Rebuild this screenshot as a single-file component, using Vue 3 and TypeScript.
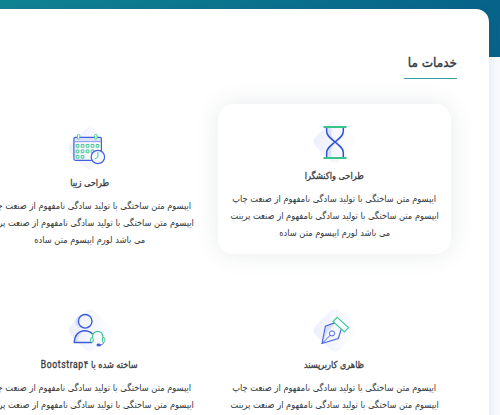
<script setup lang="ts">
interface Service {
  icon: 'hourglass' | 'calendar' | 'pen' | 'support'
  title: string
  latin?: string
  active?: boolean
}

const services: Service[] = [
  { icon: 'hourglass', title: 'طراحی واکنشگرا', active: true },
  { icon: 'calendar', title: 'طراحی زیبا' },
  { icon: 'pen', title: 'ظاهری کاربرپسند' },
  { icon: 'support', title: 'ساخته شده با ', latin: 'Bootstrap۴' },
]

const lines: string[] = [
  'ایپسوم متن ساختگی با تولید سادگی نامفهوم از صنعت چاپ',
  'ایپسوم متن ساختگی با تولید سادگی نامفهوم از صنعت پرینت',
  'می باشد لورم ایپسوم متن ساده',
]
</script>

<template>
  <div class="page" dir="rtl">
    <main class="panel">
      <h2 class="heading"><span class="heading-text">خدمات ما</span></h2>
      <section class="grid">
        <article v-for="s in services" :key="s.icon" class="card" :class="{ active: s.active }">
          <svg class="icon" viewBox="0 0 50 46" fill="none">
            <defs>
              <linearGradient :id="'blob-' + s.icon" x1="0" y1="1" x2="1" y2="0">
                <stop offset="0" stop-color="#ebeffc" />
                <stop offset="1" stop-color="#ffffff" />
              </linearGradient>
            </defs>
            <rect x="8" y="5.500" width="34" height="34" rx="7" transform="rotate(45 25 22.500)" :fill="`url(#blob-${s.icon})`" />
            <g v-if="s.icon === 'hourglass'" transform="translate(-.5 0)">
              <path d="M19 8c-1 9 0 10 6 15-6 5-7 8-6 15h3c-1-7 0-10 5-15-5-5-6-7-5-15z" fill="#dbe1fa" />
              <path d="M17.200 8v4.500c0 4 3 6 8.300 10.500s8.300 6.500 8.300 10.500V38M33.800 8v4.500c0 4-3 6-8.300 10.500S17.200 29.500 17.200 33.500V38" stroke="#3153d5" stroke-width="1.500" />
              <path d="M14 8h23M14 39h23" stroke="#35c58d" stroke-width="1.800" />
            </g>
            <g v-else-if="s.icon === 'calendar'" transform="translate(-5.800 0)">
              <path d="M15 12h27v4H15z" fill="#dbe1fa" />
              <rect x="14.700" y="11.300" width="27.500" height="23" rx="1.500" stroke="#4260da" stroke-width="1.200" />
              <path d="M15 15.600h27" stroke="#8c9eea" />
              <g stroke="#47ca96" stroke-width="1">
                <rect x="18.200" y="8.500" width="2.400" height="4.600" rx="1" fill="#fff" />
                <rect x="35.400" y="8.500" width="2.400" height="4.600" rx="1" fill="#fff" />
                <path d="M17 18.500h2.700v2.700H17zM22 18.500h2.700v2.700H22zM27 18.500h2.700v2.700H27zM32 18.500h2.700v2.700H32zM37 18.500h2.700v2.700H37zM17 24h2.700v2.700H17zM22 24h2.700v2.700H22zM27 24h2.700v2.700H27zM32 24h2.700v2.700H32zM17 29.500h2.700v2.700H17zM22 29.500h2.700v2.700H22z" />
              </g>
              <circle cx="38.700" cy="31" r="6.700" fill="#f7f9ff" stroke="#4260da" stroke-width="1.200" />
              <path d="M38.700 26v5.200L35.500 33" stroke="#47ca96" />
            </g>
            <g v-else-if="s.icon === 'pen'" transform="translate(-4 -2)">
              <path d="M16 38l4-17 9-4-3 4-4 4z" fill="#d7def9" />
              <path d="M16 37.500l3.400-17.300 10.300-3.700 5.600 6.300-3 9.700z" stroke="#4764db" stroke-width="1.150" />
              <path d="M16 37.500l8.400-8.400" stroke="#4764db" />
              <circle cx="26" cy="27.400" r="2.600" stroke="#4764db" />
              <path d="M31.200 11.300L42.500 21.600 38.400 26 27.100 15.500z" fill="#fbfeff" stroke="#3cca91" stroke-width="1.150" />
            </g>
            <g v-else transform="translate(-5.300 -.9)">
              <path d="M22 8a6.500 6.500 0 0 0 0 13 8 8 0 0 1 0-13zM16 35c0-7 4-11 10-11-6 2-8 6-8 11z" fill="#d7def9" />
              <circle cx="25.500" cy="14.200" r="6.800" stroke="#3c5cd9" stroke-width="1.400" />
              <path d="M32.500 35.400H14.600c0-7 4.200-11.800 10.400-11.800 3.500 0 6 1.200 7.800 3.300" stroke="#3c5cd9" stroke-width="1.400" />
              <path d="M32.800 31v-1.500a5.200 5.200 0 0 1 10.400 0V31" stroke="#3ac78f" stroke-width="1.200" />
              <rect x="31" y="30.600" width="2.500" height="4.600" rx="1.100" fill="#fff" stroke="#3ac78f" />
              <rect x="42.700" y="30.600" width="2.500" height="4.600" rx="1.100" fill="#fff" stroke="#3ac78f" />
              <path d="M43.500 35.500c0 1.600-1 2.200-2.600 2.200" stroke="#3c5cd9" />
              <rect x="37.200" y="37" width="3.600" height="1.800" rx=".9" fill="#3c5cd9" stroke="#3c5cd9" />
            </g>
          </svg>
          <h3 class="title">
            <span class="title-text">{{ s.title }}<span v-if="s.latin" class="latin">{{ s.latin }}</span></span>
          </h3>
          <p class="copy">
            <span v-for="line in lines" :key="line" class="line">{{ line }}</span>
          </p>
        </article>
      </section>
    </main>
  </div>
</template>

<style>
body {
  background: #f8f9fe;
  overflow: hidden;
}
</style>

<style scoped>
.page {
  box-sizing: border-box;
  width: 500px;
  height: 415px;
  padding: 9px 11px 0 0;
  overflow: hidden;
  background: linear-gradient(100deg, #108493 0%, #0b718d 55%, #08628a 100%) top / 100% 57px no-repeat #f8f9fe;
  font-family: "DejaVu Sans", sans-serif;
  color: #343a40;
}
.panel {
  box-sizing: border-box;
  width: 554px;
  height: 500px;
  padding-block: 41px 0;
  padding-inline: 38px 32px;
  border-radius: 13px;
  background: #fff;
  box-shadow: 0 0 10px rgba(50, 70, 110, 0.13);
}
.heading {
  box-sizing: border-box;
  width: 53px;
  height: 29px;
  margin: 0 -6px 0 0;
  border-bottom: 1px solid #369ea4;
  font-size: 13px;
  font-weight: 400;
  -webkit-text-stroke: 0.4px #343a40;
  line-height: 25px;
  white-space: nowrap;
}
.heading-text {
  display: inline-block;
  transform: scaleX(0.93);
  transform-origin: right;
}
.grid {
  display: grid;
  grid-template-columns: 233px 233px;
  grid-auto-rows: 150px;
  gap: 32px 12px;
  margin-top: 32px;
}
.card {
  display: flex;
  flex-direction: column;
  align-items: center;
  border-radius: 15px;
}
.card.active {
  transform: translateY(-7px);
  background: #fff;
  box-shadow: 0 0 24px rgba(50, 60, 80, 0.11);
}
.icon {
  width: 50px;
  height: 46px;
  margin-top: 15px;
}
.title {
  display: flex;
  justify-content: center;
  margin: 2px 0 0;
  font-size: 9.5px;
  font-weight: 400;
  -webkit-text-stroke: 0.3px #343a40;
  line-height: 18px;
  white-space: nowrap;
}
.title-text {
  transform: scaleX(0.86);
}
.latin {
  font-family: Roboto, "DejaVu Sans", sans-serif;
  font-size: 10px;
  letter-spacing: 0.7px;
}
.copy {
  display: flex;
  flex-direction: column;
  align-items: center;
  margin: 5px 0 0;
  font-size: 9.5px;
  line-height: 17.2px;
  white-space: nowrap;
}
.line {
  transform: scaleX(0.87);
}
</style>
